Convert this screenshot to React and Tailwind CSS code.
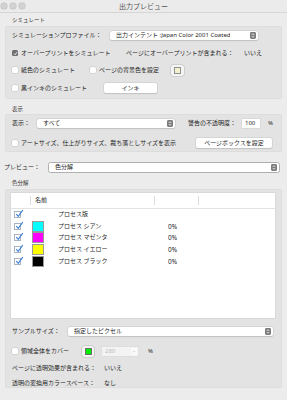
// 出力プレビュー パネル
const Stepper = () => (
  <svg width="6" height="7" viewBox="0 0 6 7" className="shrink-0">
    <rect x="0" y="0" width="6" height="7" rx="1.4" fill="#7c7c7c" />
    <path d="M1.8 2.9 L3 1.7 L4.2 2.9" stroke="#fff" strokeWidth="0.8" fill="none" />
    <path d="M1.8 4.1 L3 5.3 L4.2 4.1" stroke="#fff" strokeWidth="0.8" fill="none" />
  </svg>
);

function Casilla({ marcada }) {
  if (marcada) {
    return (
      <span className="w-[6px] h-[6px] rounded-[1.5px] bg-[#6f6f6f] flex items-center justify-center shrink-0">
        <svg width="5" height="5" viewBox="0 0 5 5">
          <path d="M1 2.6 L2.1 3.7 L4 1.2" stroke="#fff" strokeWidth="0.9" fill="none" />
        </svg>
      </span>
    );
  }
  return (
    <span className="w-[6px] h-[6px] rounded-[1.5px] bg-white shadow-[0_0_0_0.5px_#c4c4c4] shrink-0" />
  );
}

const CasillaAzul = () => (
  <span className="relative w-[7px] h-[7px] border border-[#a9b4c2] bg-white shrink-0">
    <svg width="9" height="9" viewBox="0 0 9 9" className="absolute -top-[3px] left-0">
      <path d="M1.3 5.2 L3.2 7.3 L7.8 1.2" stroke="#3f7fd8" strokeWidth="1.15" fill="none" />
    </svg>
  </span>
);

function Popup({ texto, className }) {
  return (
    <div
      className={`h-[9px] bg-white rounded-[2px] shadow-[0_0_0_0.5px_#c9c9c9,0_0.5px_1px_rgba(0,0,0,0.18)] flex items-center justify-between pl-[6px] pr-[2px] ${className}`}
    >
      <span className="truncate">{texto}</span>
      <Stepper />
    </div>
  );
}

function Boton({ texto, className }) {
  return (
    <div
      className={`h-[10px] bg-white rounded-[2px] shadow-[0_0_0_0.5px_#c9c9c9,0_0.5px_1px_rgba(0,0,0,0.18)] flex items-center justify-center ${className}`}
    >
      {texto}
    </div>
  );
}

const Fila = ({ children, className = "" }) => (
  <div className={`h-[12px] flex items-center ${className}`}>{children}</div>
);

const separaciones = [
  { nombre: "プロセス版", color: null, valor: "" },
  { nombre: "プロセス シアン", color: "bg-[#00ffff]", valor: "0%" },
  { nombre: "プロセス マゼンタ", color: "bg-[#ff00ff]", valor: "0%" },
  { nombre: "プロセス イエロー", color: "bg-[#ffff00]", valor: "0%" },
  { nombre: "プロセス ブラック", color: "bg-black", valor: "0%" },
];

export default function App() {
  return (
    <div className="w-[287px] h-[400px] overflow-hidden bg-[#ececec] text-[6px] leading-[7px] text-[#1f1f1f] font-['Noto_Sans','Noto_Sans_CJK_JP',sans-serif]">
      {/* barra de título */}
      <div className="relative h-[13px] bg-[#ebebeb] border-b border-[#d6d6d6] flex items-center pl-[1px] gap-[3.5px]">
        <span className="w-[5.5px] h-[5.5px] rounded-full bg-[#d2d2d2] shadow-[0_0_0_0.5px_#bdbdbd]" />
        <span className="w-[5.5px] h-[5.5px] rounded-full bg-[#d2d2d2] shadow-[0_0_0_0.5px_#bdbdbd]" />
        <span className="w-[5.5px] h-[5.5px] rounded-full bg-[#d2d2d2] shadow-[0_0_0_0.5px_#bdbdbd]" />
        <span className="absolute inset-0 flex items-center justify-center text-[7px] text-[#555]">
          出力プレビュー
        </span>
      </div>

      <div className="px-[5px]">
        {/* シミュレート */}
        <div className="mt-[4px] h-[7px] pl-[7px] text-[5.5px] text-[#333]">シミュレート</div>
        <div className="mt-[2px] bg-[#e3e3e3] rounded-[3px] shadow-[inset_0_0_0_0.5px_#d8d8d8] pl-[7px] pt-[3px] pb-[5px]">
          <Fila>
            <span className="w-[98px] shrink-0">シミュレーションプロファイル：</span>
            <Popup texto="出力インテント :Japan Color 2001 Coated" className="w-[148px] pl-[5px]" />
          </Fila>
          <Fila className="mt-[6px]">
            <span className="w-[114px] shrink-0 flex items-center gap-[3px]">
              <Casilla marcada />
              オーバープリントをシミュレート
            </span>
            <span className="w-[118px] shrink-0">ページにオーバープリントが含まれる：</span>
            <span>いいえ</span>
          </Fila>
          <Fila className="mt-[5px]">
            <span className="w-[78px] shrink-0 flex items-center gap-[3px]">
              <Casilla />
              紙色のシミュレート
            </span>
            <span className="w-[81px] shrink-0 flex items-center gap-[3px]">
              <Casilla />
              ページの背景色を設定
            </span>
            <span className="w-[13px] h-[11px] rounded-[2px] bg-[#f4f4f4] shadow-[0_0_0_0.5px_#b9b9b9] flex items-center justify-center">
              <span className="w-[7px] h-[7px] bg-[#f5f1cf] border-[0.5px] border-[#8f8f8f]" />
            </span>
          </Fila>
          <Fila className="mt-[6px]">
            <span className="w-[92px] shrink-0 flex items-center gap-[3px]">
              <Casilla />
              黒インキのシミュレート
            </span>
            <Boton texto="インキ" className="w-[53px]" />
          </Fila>
        </div>

        {/* 表示 */}
        <div className="mt-[7px] h-[7px] pl-[7px] text-[5.5px] text-[#333]">表示</div>
        <div className="mt-[1px] bg-[#e3e3e3] rounded-[3px] shadow-[inset_0_0_0_0.5px_#d8d8d8] pl-[7px] pt-[3px] pb-[3px]">
          <Fila>
            <span className="w-[25px] shrink-0">表示：</span>
            <Popup texto="すべて" className="w-[138px]" />
            <span className="ml-[13px] w-[54px] shrink-0">警告の不透明度：</span>
            <span className="w-[18px] h-[9px] bg-white shadow-[0_0_0_0.5px_#cfcfcf] flex items-center pl-[3px] shrink-0">
              100
            </span>
            <span className="ml-[8px]">%</span>
          </Fila>
          <Fila className="mt-[8px]">
            <span className="w-[184px] shrink-0 flex items-center gap-[3px]">
              <Casilla />
              アートサイズ、仕上がりサイズ、裁ち落としサイズを表示
            </span>
            <Boton texto="ページボックスを設定" className="w-[76px]" />
          </Fila>
        </div>
      </div>

      {/* プレビュー */}
      <Fila className="mt-[9px] pl-[4px]">
        <span className="w-[44px] shrink-0">プレビュー：</span>
        <div className="w-[232px] h-[11px] bg-white rounded-[2.5px] border border-[#b0b0b0] flex items-center justify-between pl-[6px] pr-[2px]">
          <span>色分解</span>
          <Stepper />
        </div>
      </Fila>

      <div className="px-[5px]">
        {/* 色分解 */}
        <div className="mt-[7px] h-[7px] pl-[7px] text-[5.5px] text-[#333]">色分解</div>
        <div className="mt-[2px] bg-[#e3e3e3] rounded-[3px] shadow-[inset_0_0_0_0.5px_#d8d8d8] pt-[4px] pb-[1px]">
          <div className="ml-[6px] w-[264px] h-[125px] bg-white shadow-[0_0_0_0.5px_#d0d0d0]">
            <div className="h-[16px] flex items-center border-b border-[#e3e3e3]">
              <span className="w-[20px] h-[9px] border-r border-[#dcdcdc] shrink-0" />
              <span className="w-[124px] h-[9px] border-r border-[#dcdcdc] pl-[4px] flex items-center shrink-0">
                名前
              </span>
              <span className="w-[44px] h-[9px] border-r border-[#dcdcdc] shrink-0" />
            </div>
            {separaciones.map((s) => (
              <div key={s.nombre} className="h-[11.6px] flex items-center">
                <span className="w-[20px] pl-[3px] flex items-center shrink-0">
                  <CasillaAzul />
                </span>
                <span className="w-[27px] pl-[1px] shrink-0 flex items-center">
                  {s.color && (
                    <span className={`w-[12px] h-[11px] ${s.color} border-[0.5px] border-[#9a9a9a]`} />
                  )}
                </span>
                <span className="w-[110px] shrink-0">{s.nombre}</span>
                <span className="text-[6.5px]">{s.valor}</span>
              </div>
            ))}
          </div>

          <div className="pl-[7px]">
            <Fila className="mt-[7px]">
              <span className="w-[56px] shrink-0">サンプルサイズ：</span>
              <Popup texto="指定したピクセル" className="w-[205px]" />
            </Fila>
            <Fila className="mt-[8px]">
              <span className="w-[70px] shrink-0 flex items-center gap-[3px]">
                <Casilla />
                領域全体をカバー
              </span>
              <span className="w-[12px] h-[11px] rounded-[2px] bg-[#f4f4f4] shadow-[0_0_0_0.5px_#b9b9b9] flex items-center justify-center shrink-0">
                <span className="w-[7px] h-[7px] bg-[#00f000] border-[0.5px] border-[#6f6f6f]" />
              </span>
              <span className="ml-[8px] w-[36px] h-[9px] bg-[#f3f3f3] shadow-[0_0_0_0.5px_#dadada] flex items-center justify-between pl-[3px] pr-[1px] text-[#bdbdbd] shrink-0">
                280
                <span className="w-[6px] h-[7px] rounded-[1px] bg-[#fafafa] flex items-center justify-center">
                  <svg width="4" height="3" viewBox="0 0 4 3">
                    <path d="M0.6 0.8 L2 2.2 L3.4 0.8" stroke="#c8c8c8" strokeWidth="0.7" fill="none" />
                  </svg>
                </span>
              </span>
              <span className="ml-[10px]">%</span>
            </Fila>
            <div className="mt-[7px] h-[8px] flex items-center">
              <span className="w-[92px] shrink-0">ページに透明効果が含まれる：</span>
              <span>いいえ</span>
            </div>
            <div className="mt-[7px] h-[8px] flex items-center">
              <span className="w-[92px] shrink-0">透明の変換用カラースペース：</span>
              <span>なし</span>
            </div>
          </div>
        </div>
      </div>
    </div>
  );
}
